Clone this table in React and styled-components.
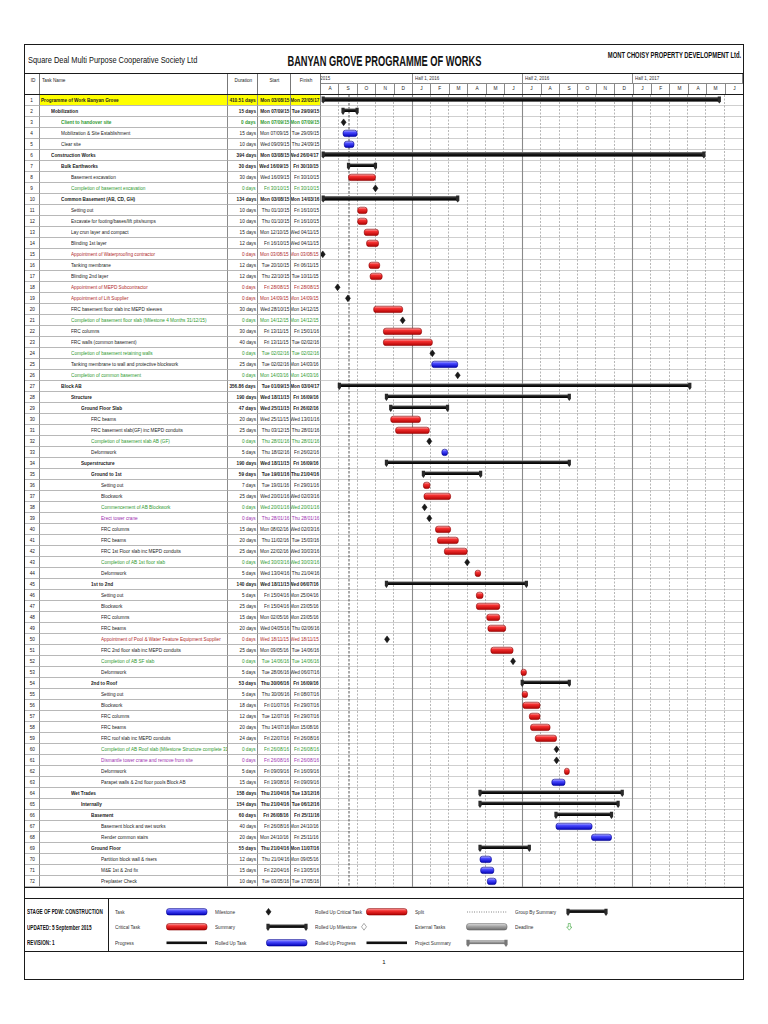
import React from 'react';
import styled, { createGlobalStyle } from 'styled-components';

const GlobalStyle = createGlobalStyle`
  html, body {
    margin: 0;
    padding: 0;
    background: #fff;
  }
  body {
    font-family: "Liberation Sans", Arial, sans-serif;
    color: #111;
  }
`;

const MONTH_W = 422 / 23;
const ROW_H = 11;

const tasks = [
  [0, 'P', 'k', 1, 'Programme of Work Banyan Grove', '410.51 days', 'Mon 03/08/15', 'Mon 22/05/17'],
  [1, 'S', 'k', 1, 'Mobilization', '15 days', 'Mon 07/09/15', 'Tue 29/09/15'],
  [2, 'M', 'g', 1, 'Client to handover site', '0 days', 'Mon 07/09/15', 'Mon 07/09/15'],
  [2, 'T', 'k', 0, 'Mobilization & Site Establishment', '15 days', 'Mon 07/09/15', 'Tue 29/09/15'],
  [2, 'T', 'k', 0, 'Clear site', '10 days', 'Wed 09/09/15', 'Thu 24/09/15'],
  [1, 'P', 'k', 1, 'Construction Works', '394 days', 'Mon 03/08/15', 'Wed 26/04/17'],
  [2, 'S', 'k', 1, 'Bulk Earthworks', '30 days', 'Wed 16/09/15', 'Fri 30/10/15'],
  [3, 'C', 'k', 0, 'Basement excavation', '30 days', 'Wed 16/09/15', 'Fri 30/10/15'],
  [3, 'M', 'g', 0, 'Completion of basement excavation', '0 days', 'Fri 30/10/15', 'Fri 30/10/15'],
  [2, 'P', 'k', 1, 'Common Basement (AB, CD, GH)', '134 days', 'Mon 03/08/15', 'Mon 14/03/16'],
  [3, 'C', 'k', 0, 'Setting out', '10 days', 'Thu 01/10/15', 'Fri 16/10/15'],
  [3, 'C', 'k', 0, 'Excavate for footing/bases/lift pits/sumps', '10 days', 'Thu 01/10/15', 'Fri 16/10/15'],
  [3, 'C', 'k', 0, 'Lay crun layer and compact', '15 days', 'Mon 12/10/15', 'Wed 04/11/15'],
  [3, 'C', 'k', 0, 'Blinding 1st layer', '12 days', 'Fri 16/10/15', 'Wed 04/11/15'],
  [3, 'M', 'r', 0, 'Appointment of Waterproofing contractor', '0 days', 'Mon 03/08/15', 'Mon 03/08/15'],
  [3, 'C', 'k', 0, 'Tanking membrane', '12 days', 'Tue 20/10/15', 'Fri 06/11/15'],
  [3, 'C', 'k', 0, 'Blinding 2nd layer', '12 days', 'Thu 22/10/15', 'Tue 10/11/15'],
  [3, 'M', 'r', 0, 'Appointment of MEPD Subcontractor', '0 days', 'Fri 28/08/15', 'Fri 28/08/15'],
  [3, 'M', 'r', 0, 'Appointment of Lift Supplier', '0 days', 'Mon 14/09/15', 'Mon 14/09/15'],
  [3, 'C', 'k', 0, 'FRC basement floor slab inc MEPD sleeves', '30 days', 'Wed 28/10/15', 'Mon 14/12/15'],
  [3, 'M', 'g', 0, 'Completion of basement floor slab (Milestone 4 Months 31/12/15)', '0 days', 'Mon 14/12/15', 'Mon 14/12/15'],
  [3, 'C', 'k', 0, 'FRC columns', '30 days', 'Fri 13/11/15', 'Fri 15/01/16'],
  [3, 'C', 'k', 0, 'FRC walls (common basement)', '40 days', 'Fri 13/11/15', 'Tue 02/02/16'],
  [3, 'M', 'g', 0, 'Completion of basement retaining walls', '0 days', 'Tue 02/02/16', 'Tue 02/02/16'],
  [3, 'T', 'k', 0, 'Tanking membrane to wall and protective blockwork', '25 days', 'Tue 02/02/16', 'Mon 14/03/16'],
  [3, 'M', 'g', 0, 'Completion of common basement', '0 days', 'Mon 14/03/16', 'Mon 14/03/16'],
  [2, 'S', 'k', 1, 'Block AB', '356.86 days', 'Tue 01/09/15', 'Mon 03/04/17'],
  [3, 'S', 'k', 1, 'Structure', '190 days', 'Wed 18/11/15', 'Fri 16/09/16'],
  [4, 'S', 'k', 1, 'Ground Floor Slab', '47 days', 'Wed 25/11/15', 'Fri 26/02/16'],
  [5, 'C', 'k', 0, 'FRC beams', '20 days', 'Wed 25/11/15', 'Wed 13/01/16'],
  [5, 'C', 'k', 0, 'FRC basement slab(GF) inc MEPD conduits', '25 days', 'Thu 03/12/15', 'Thu 28/01/16'],
  [5, 'M', 'g', 0, 'Completion of basement slab AB (GF)', '0 days', 'Thu 28/01/16', 'Thu 28/01/16'],
  [5, 'T', 'k', 0, 'Deformwork', '5 days', 'Thu 18/02/16', 'Fri 26/02/16'],
  [4, 'S', 'k', 1, 'Superstructure', '190 days', 'Wed 18/11/15', 'Fri 16/09/16'],
  [5, 'S', 'k', 1, 'Ground to 1st', '59 days', 'Tue 19/01/16', 'Thu 21/04/16'],
  [6, 'C', 'k', 0, 'Setting out', '7 days', 'Tue 19/01/16', 'Fri 29/01/16'],
  [6, 'C', 'k', 0, 'Blockwork', '25 days', 'Wed 20/01/16', 'Wed 02/03/16'],
  [6, 'M', 'g', 0, 'Commencement of AB Blockwork', '0 days', 'Wed 20/01/16', 'Wed 20/01/16'],
  [6, 'M', 'p', 0, 'Erect tower crane', '0 days', 'Thu 28/01/16', 'Thu 28/01/16'],
  [6, 'C', 'k', 0, 'FRC columns', '15 days', 'Mon 08/02/16', 'Wed 02/03/16'],
  [6, 'C', 'k', 0, 'FRC beams', '20 days', 'Thu 11/02/16', 'Tue 15/03/16'],
  [6, 'C', 'k', 0, 'FRC 1st Floor slab inc MEPD conduits', '25 days', 'Mon 22/02/16', 'Wed 30/03/16'],
  [6, 'M', 'g', 0, 'Completion of AB 1st floor slab', '0 days', 'Wed 30/03/16', 'Wed 30/03/16'],
  [6, 'C', 'k', 0, 'Deformwork', '5 days', 'Wed 13/04/16', 'Thu 21/04/16'],
  [5, 'S', 'k', 1, '1st to 2nd', '140 days', 'Wed 18/11/15', 'Wed 06/07/16'],
  [6, 'C', 'k', 0, 'Setting out', '5 days', 'Fri 15/04/16', 'Mon 25/04/16'],
  [6, 'C', 'k', 0, 'Blockwork', '25 days', 'Fri 15/04/16', 'Mon 23/05/16'],
  [6, 'C', 'k', 0, 'FRC columns', '15 days', 'Mon 02/05/16', 'Mon 23/05/16'],
  [6, 'C', 'k', 0, 'FRC beams', '20 days', 'Wed 04/05/16', 'Thu 02/06/16'],
  [6, 'M', 'r', 0, 'Appointment of Pool & Water Feature Equipment Supplier', '0 days', 'Wed 18/11/15', 'Wed 18/11/15'],
  [6, 'C', 'k', 0, 'FRC 2nd floor slab inc MEPD conduits', '25 days', 'Mon 09/05/16', 'Tue 14/06/16'],
  [6, 'M', 'g', 0, 'Completion of AB SF slab', '0 days', 'Tue 14/06/16', 'Tue 14/06/16'],
  [6, 'C', 'k', 0, 'Deformwork', '5 days', 'Tue 28/06/16', 'Wed 06/07/16'],
  [5, 'S', 'k', 1, '2nd to Roof', '53 days', 'Thu 30/06/16', 'Fri 16/09/16'],
  [6, 'C', 'k', 0, 'Setting out', '5 days', 'Thu 30/06/16', 'Fri 08/07/16'],
  [6, 'C', 'k', 0, 'Blockwork', '18 days', 'Fri 01/07/16', 'Fri 29/07/16'],
  [6, 'C', 'k', 0, 'FRC columns', '12 days', 'Tue 12/07/16', 'Fri 29/07/16'],
  [6, 'C', 'k', 0, 'FRC beams', '20 days', 'Thu 14/07/16', 'Mon 15/08/16'],
  [6, 'C', 'k', 0, 'FRC roof slab inc MEPD conduits', '24 days', 'Fri 22/07/16', 'Fri 26/08/16'],
  [6, 'M', 'g', 0, 'Completion of AB Roof slab (Milestone Structure complete 31/08/16)', '0 days', 'Fri 26/08/16', 'Fri 26/08/16'],
  [6, 'M', 'p', 0, 'Dismantle tower crane and remove from site', '0 days', 'Fri 26/08/16', 'Fri 26/08/16'],
  [6, 'C', 'k', 0, 'Deformwork', '5 days', 'Fri 09/09/16', 'Fri 16/09/16'],
  [6, 'T', 'k', 0, 'Parapet walls & 2nd floor pools Block AB', '15 days', 'Fri 19/08/16', 'Fri 09/09/16'],
  [3, 'S', 'k', 1, 'Wet Trades', '158 days', 'Thu 21/04/16', 'Tue 13/12/16'],
  [4, 'S', 'k', 1, 'Internally', '154 days', 'Thu 21/04/16', 'Tue 06/12/16'],
  [5, 'S', 'k', 1, 'Basement', '60 days', 'Fri 26/08/16', 'Fri 25/11/16'],
  [6, 'T', 'k', 0, 'Basement block and wet works', '40 days', 'Fri 26/08/16', 'Mon 24/10/16'],
  [6, 'T', 'k', 0, 'Render common stairs', '20 days', 'Mon 24/10/16', 'Fri 25/11/16'],
  [5, 'S', 'k', 1, 'Ground Floor', '55 days', 'Thu 21/04/16', 'Mon 11/07/16'],
  [6, 'T', 'k', 0, 'Partition block wall & risers', '12 days', 'Thu 21/04/16', 'Mon 09/05/16'],
  [6, 'T', 'k', 0, 'M&E 1st & 2nd fix', '15 days', 'Fri 22/04/16', 'Fri 13/05/16'],
  [6, 'T', 'k', 0, 'Preplaster Check', '10 days', 'Tue 03/05/16', 'Tue 17/05/16'],
];

const textColors = { k: '#222', g: '#2f9a2f', r: '#b02a2a', p: '#9c2fb0' };
const months = ['A', 'S', 'O', 'N', 'D', 'J', 'F', 'M', 'A', 'M', 'J', 'J', 'A', 'S', 'O', 'N', 'D', 'J', 'F', 'M', 'A', 'M', 'J'];
const halves = [
  { label: 'Half 2, 2015', span: 5, shift: -17 },
  { label: 'Half 1, 2016', span: 6 },
  { label: 'Half 2, 2016', span: 6 },
  { label: 'Half 1, 2017', span: 6 },
];

// date string "Mon 03/08/15" -> x offset inside the chart
const daysIn = (y, m) => new Date(2000 + y, m, 0).getDate();
const dateX = (str, endOfDay) => {
  const [d, m, y] = str.slice(4).split('/').map(Number);
  const frac = (endOfDay ? d : d - 1) / daysIn(y, m);
  return ((y - 15) * 12 + (m - 8) + frac) * MONTH_W;
};

const justify = { left: 'flex-start', center: 'center', right: 'flex-end' };

// the printout uses a narrow face: squeeze Liberation Sans horizontally
const Narrow = styled.span`
  display: inline-block;
  flex-shrink: 0;
  white-space: nowrap;
  transform: scaleX(${(p) => p.$sx || 0.78});
  transform-origin: ${(p) => p.$origin || 'left'} center;
`;

const Page = styled.div`
  width: 768px;
  height: 1024px;
  padding: 44px 0 0 24px;
  box-sizing: border-box;
`;

const Frame = styled.div`
  width: 720px;
  border: 1px solid #1a1a1a;
  box-sizing: border-box;
  display: flex;
  flex-direction: column;
`;

const TitleBar = styled.div`
  display: grid;
  grid-template-columns: 1fr auto 1fr;
  align-items: center;
  height: 28px;
  border-bottom: 1px solid #1a1a1a;
  overflow: hidden;
`;

const OrgName = styled.div`
  font-size: 9.5px;
  padding: 1px 0 0 3px;
`;

const MainTitle = styled.div`
  display: flex;
  justify-content: center;
  width: 200px;
  font-size: 15px;
  font-weight: bold;
  padding-top: 2px;
`;

const ClientName = styled.div`
  display: flex;
  justify-content: flex-end;
  align-self: start;
  padding: 5px 2px 0 0;
  font-size: 9px;
  font-weight: bold;
`;

const HeaderRow = styled.div`
  display: grid;
  grid-template-columns: 15px 188px 30px 33px 30px 422px;
  height: 20px;
  border-bottom: 1px solid #1a1a1a;
  font-size: 6px;
  color: #222;
`;

const HeadCell = styled.div`
  display: flex;
  justify-content: ${(p) => justify[p.$align || 'center']};
  align-items: flex-start;
  border-right: 1px solid #777;
  padding: 3px 1px 0 2px;
  overflow: hidden;
`;

const Timescale = styled.div`
  display: flex;
  flex-direction: column;
`;

const Tier = styled.div`
  display: flex;
  height: 10px;
  border-bottom: ${(p) => (p.$top ? '1px solid #888' : 'none')};
  box-sizing: border-box;
`;

const HalfCell = styled.div`
  flex: ${(p) => p.$span};
  display: flex;
  border-right: 1px solid #888;
  overflow: hidden;
  line-height: 9px;
  padding-left: 2px;
  font-size: 5.6px;
  color: #333;
`;

const MonthCell = styled.div`
  flex: 1;
  display: flex;
  justify-content: center;
  border-right: 1px solid #888;
  line-height: 9px;
  font-size: 6px;
  &:last-child {
    border-right: none;
  }
`;

const Body = styled.div`
  display: flex;
`;

const TaskTable = styled.div`
  display: grid;
  grid-template-columns: 15px 188px 30px 33px 30px;
  grid-auto-rows: ${ROW_H}px;
`;

const Cell = styled.div`
  display: flex;
  align-items: center;
  justify-content: ${(p) => justify[p.$align || 'left']};
  box-sizing: border-box;
  border-right: 1px solid #8c8c8c;
  border-bottom: 1px solid #b8b8b8;
  font-size: 6px;
  overflow: hidden;
  padding: 0 ${(p) => (p.$align === 'right' ? 1 : 0)}px 0 ${(p) => p.$indent || 0}px;
  color: ${(p) => p.$color};
  font-weight: ${(p) => (p.$bold ? 'bold' : 'normal')};
  background: ${(p) => (p.$hl ? '#ffff00' : 'transparent')};
`;

const Spacer = styled.div`
  height: 10px;
  border-top: 1px solid #1a1a1a;
`;

const Legend = styled.div`
  display: flex;
  height: 54px;
  border-top: 1px solid #1a1a1a;
  border-bottom: 1px solid #1a1a1a;
  box-sizing: border-box;
`;

const StageBox = styled.div`
  width: 84px;
  display: flex;
  flex-direction: column;
  border-right: 1px solid #1a1a1a;
  padding: 5px 0 0 2px;
  box-sizing: border-box;
  font-size: 7.5px;
  font-weight: bold;
  line-height: 15.5px;
  overflow: hidden;
`;

const LegendGrid = styled.div`
  display: grid;
  grid-template-columns: repeat(5, 100px);
  grid-auto-rows: 15.5px;
  padding: 5px 0 0 6px;
`;

const LegendItem = styled.div`
  display: flex;
  align-items: center;
  font-size: 6px;
  color: #333;
`;

const LegendLabel = styled.div`
  display: flex;
  width: 51px;
  overflow: hidden;
`;

const Footer = styled.div`
  height: 27px;
  display: flex;
  justify-content: center;
  font-size: 6px;
  padding-top: 7px;
  box-sizing: border-box;
`;

const Defs = styled.svg`
  display: block;
  width: 0;
  height: 0;
`;

const GradientDefs = () => (
  <Defs>
    <defs>
      <linearGradient id="gBlue" x1="0" y1="0" x2="0" y2="1">
        <stop offset="0" stopColor="#b8b8ff" />
        <stop offset="0.35" stopColor="#4a4aff" />
        <stop offset="1" stopColor="#0000b8" />
      </linearGradient>
      <linearGradient id="gRed" x1="0" y1="0" x2="0" y2="1">
        <stop offset="0" stopColor="#ffb0b0" />
        <stop offset="0.35" stopColor="#f43030" />
        <stop offset="1" stopColor="#b00000" />
      </linearGradient>
      <linearGradient id="gBlack" x1="0" y1="0" x2="0" y2="1">
        <stop offset="0" stopColor="#8a8a8a" />
        <stop offset="0.4" stopColor="#1c1c1c" />
        <stop offset="1" stopColor="#000" />
      </linearGradient>
      <linearGradient id="gGrey" x1="0" y1="0" x2="0" y2="1">
        <stop offset="0" stopColor="#e4e4e4" />
        <stop offset="0.4" stopColor="#a8a8a8" />
        <stop offset="1" stopColor="#6e6e6e" />
      </linearGradient>
    </defs>
  </Defs>
);

const TaskBar = ({ x1, x2, y, critical, grey }) => (
  <rect
    x={x1}
    y={y}
    width={Math.max(x2 - x1, 2.5)}
    height={6.4}
    rx={2.6}
    fill={grey ? 'url(#gGrey)' : critical ? 'url(#gRed)' : 'url(#gBlue)'}
    stroke={grey ? '#666' : critical ? '#8a0000' : '#00008c'}
    strokeWidth={0.6}
  />
);

const cap = (x, y) => `M${x - 1.6} ${y - 0.6}h3.2v5l-1.6 2.2l-1.6 -2.2z`;

const SummaryBar = ({ x1, x2, y, h = 3.6, grey }) => (
  <g>
    <rect x={x1} y={y} width={x2 - x1} height={h} fill={grey ? 'url(#gGrey)' : 'url(#gBlack)'} stroke={grey ? '#666' : 'none'} strokeWidth={0.4} />
    <path d={cap(x1, y)} fill={grey ? '#777' : '#2a2a2a'} />
    <path d={cap(x2, y)} fill={grey ? '#777' : '#2a2a2a'} />
  </g>
);

const Diamond = ({ x, y, hollow }) => (
  <path
    d={`M${x} ${y - 3.4}L${x + 2.5} ${y}L${x} ${y + 3.4}L${x - 2.5} ${y}Z`}
    fill={hollow ? '#fff' : '#1a1a1a'}
    stroke={hollow ? '#555' : '#000'}
    strokeWidth={0.5}
  />
);

const ChartSvg = styled.svg`
  display: block;
`;

const Chart = () => {
  const h = tasks.length * ROW_H;
  const status = 28;
  return (
    <ChartSvg width={422} height={h} viewBox={`0 0 422 ${h}`}>
      {tasks.map((_, i) => (
        <line key={`h${i}`} x1={0} x2={422} y1={(i + 1) * ROW_H - 0.5} y2={(i + 1) * ROW_H - 0.5} stroke="#cfcfcf" strokeWidth={1} />
      ))}
      {months.slice(1).map((_, i) => {
        const m = i + 1;
        const x = Math.round(m * MONTH_W) - 0.5;
        const half = m === 5 || m === 11 || m === 17;
        return (
          <line
            key={`v${m}`}
            x1={x}
            x2={x}
            y1={0}
            y2={h}
            stroke={half ? '#8a8a8a' : '#a4a4a4'}
            strokeWidth={half ? 1.1 : 0.8}
            strokeDasharray={half ? undefined : '2 1.5'}
          />
        );
      })}
      <line x1={status} x2={status} y1={0} y2={h} stroke="#444" strokeWidth={0.9} strokeDasharray="2.5 1.5" />
      {tasks.map(([, kind, , , , , start, finish], i) => {
        const top = i * ROW_H;
        const x1 = dateX(start, false);
        const x2 = dateX(finish, true);
        if (kind === 'M') return <Diamond key={i} x={x2} y={top + 5.3} />;
        if (kind === 'P') return <SummaryBar key={i} x1={x1 + 1} x2={x2} y={top + 2} h={4.6} />;
        if (kind === 'S') return <SummaryBar key={i} x1={x1} x2={x2} y={top + 2.4} />;
        return <TaskBar key={i} x1={x1} x2={x2} y={top + 2.2} critical={kind === 'C'} />;
      })}
    </ChartSvg>
  );
};

const Swatch = styled.svg`
  display: block;
  flex-shrink: 0;
`;

const DeadlineArrow = () => (
  <path d="M2.3 1.5h2v3.5h1.6l-2.6 3.2l-2.6 -3.2h1.6z" fill="#fff" stroke="#3aa53a" strokeWidth={0.6} />
);

const legendItems = [
  ['Task', <TaskBar x1={0.5} x2={41} y={1.6} />],
  ['Milestone', <Diamond x={2.5} y={4.8} />],
  ['Rolled Up Critical Task', <TaskBar x1={0.5} x2={41} y={1.6} critical />],
  ['Split', <line x1={1} x2={41} y1={5} y2={5} stroke="#444" strokeWidth={0.8} strokeDasharray="0.8 1.6" />],
  ['Group By Summary', <SummaryBar x1={2} x2={40} y={2.3} />],
  ['Critical Task', <TaskBar x1={0.5} x2={41} y={1.6} critical />],
  ['Summary', <SummaryBar x1={2} x2={40} y={2.3} />],
  ['Rolled Up Milestone', <Diamond x={-2} y={4.8} hollow />],
  ['External Tasks', <TaskBar x1={0.5} x2={41} y={1.6} grey />],
  ['Deadline', <DeadlineArrow />],
  ['Progress', <rect x={0.5} y={3.5} width={40.5} height={2.6} fill="#111" />],
  ['Rolled Up Task', <TaskBar x1={0.5} x2={41} y={1.6} />],
  ['Rolled Up Progress', <rect x={0.5} y={3.5} width={40.5} height={2.6} fill="#111" />],
  ['Project Summary', <SummaryBar x1={2} x2={40} y={2.3} grey />],
];

const App = () => (
  <>
    <GlobalStyle />
    <GradientDefs />
    <Page>
      <Frame>
        <TitleBar>
          <OrgName>
            <Narrow $sx={0.78}>Square Deal Multi Purpose Cooperative Society Ltd</Narrow>
          </OrgName>
          <MainTitle>
            <Narrow $sx={0.62} $origin="center">BANYAN GROVE PROGRAMME OF WORKS</Narrow>
          </MainTitle>
          <ClientName>
            <Narrow $sx={0.65} $origin="right">MONT CHOISY PROPERTY DEVELOPMENT Ltd.</Narrow>
          </ClientName>
        </TitleBar>

        <HeaderRow>
          <HeadCell><Narrow $origin="center">ID</Narrow></HeadCell>
          <HeadCell $align="left"><Narrow>Task Name</Narrow></HeadCell>
          <HeadCell><Narrow $origin="center">Duration</Narrow></HeadCell>
          <HeadCell><Narrow $origin="center">Start</Narrow></HeadCell>
          <HeadCell><Narrow $origin="center">Finish</Narrow></HeadCell>
          <Timescale>
            <Tier $top>
              {halves.map((h) => (
                <HalfCell key={h.label} $span={h.span}>
                  <Narrow $sx={0.8} style={h.shift ? { marginLeft: h.shift } : undefined}>{h.label}</Narrow>
                </HalfCell>
              ))}
            </Tier>
            <Tier>
              {months.map((m, i) => (
                <MonthCell key={i}>
                  <Narrow $sx={0.8} $origin="center">{m}</Narrow>
                </MonthCell>
              ))}
            </Tier>
          </Timescale>
        </HeaderRow>

        <Body>
          <TaskTable>
            {tasks.map(([level, , color, bold, name, dur, start, finish], i) => {
              const c = textColors[color];
              const hl = i === 0;
              return (
                <React.Fragment key={i}>
                  <Cell $align="center" $color="#222"><Narrow $origin="center">{i + 1}</Narrow></Cell>
                  <Cell $indent={1 + level * 10} $color={c} $bold={bold} $hl={hl}><Narrow>{name}</Narrow></Cell>
                  <Cell $align="right" $color={c} $bold={bold} $hl={hl}><Narrow $origin="right">{dur}</Narrow></Cell>
                  <Cell $align="right" $color={c} $bold={bold} $hl={hl}><Narrow $origin="right">{start}</Narrow></Cell>
                  <Cell $align="right" $color={c} $bold={bold} $hl={hl}><Narrow $origin="right">{finish}</Narrow></Cell>
                </React.Fragment>
              );
            })}
          </TaskTable>
          <Chart />
        </Body>

        <Spacer />

        <Legend>
          <StageBox>
            <Narrow $sx={0.62}>STAGE OF PDW: CONSTRUCTION</Narrow>
            <Narrow $sx={0.62}>UPDATED: 5 September 2015</Narrow>
            <Narrow $sx={0.62}>REVISION: 1</Narrow>
          </StageBox>
          <LegendGrid>
            {legendItems.map(([label, shape]) => (
              <LegendItem key={label}>
                <LegendLabel>
                  <Narrow>{label}</Narrow>
                </LegendLabel>
                <Swatch width={42} height={10} viewBox="0 0 42 10" overflow="visible">
                  {shape}
                </Swatch>
              </LegendItem>
            ))}
          </LegendGrid>
        </Legend>

        <Footer>1</Footer>
      </Frame>
    </Page>
  </>
);

export default App;
